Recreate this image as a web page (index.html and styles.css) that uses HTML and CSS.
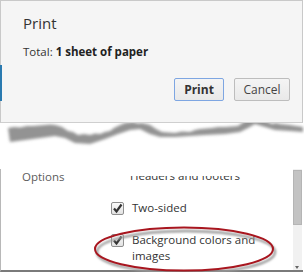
FILE: index.html
```html
<!DOCTYPE html>
<html>
<head>
<meta charset="utf-8">
<link rel="stylesheet" href="styles.css">
</head>
<body>
<div class="page">
  <div class="dialog">
    <div class="accent"></div>
    <h1 class="title">Print</h1>
    <p class="total">Total: <b>1 sheet of paper</b></p>
    <div class="actions">
      <button class="btn primary">Print</button>
      <button class="btn">Cancel</button>
    </div>
  </div>
  <svg class="tear" width="304" height="46" viewBox="0 122 304 46">
    <defs>
      <filter id="blur" x="-5%" y="-50%" width="110%" height="200%"><feGaussianBlur stdDeviation="1.4"/></filter>
    </defs>
    <path filter="url(#blur)" fill="#939393" d="M8 127 L14 126 L20 126.5 L27 125 L33 125 L39 124.5 L45 124 L50 123.5 L55 124 L62 126 L68 130 L73 131 L78 134 L84 133 L90 134 L95 132.5 L100 133 L105 131 L110 130 L114 127 L118 125 L125 122 L129 121.5 L133 121 L138 122.5 L142 122 L150 124 L156 128 L162 131 L168 131.5 L175 132 L182 130.5 L190 131 L195 129 L200 128 L206 127.5 L212 127 L218 126 L225 126 L232 125.5 L238 125 L245 120 L250 115 L256 116 L262 119 L268 121 L272 123 L276 122 L280 123 L285 123.5 L290 124 L296 125 L303 126 L303 131 L290 130 L275 129 L265 126 L255 123 L248 127 L240 131 L225 133 L205 134 L190 135 L175 136 L160 136 L150 133 L140 128 L130 129 L118 133 L105 138 L90 143 L75 142 L65 137 L55 135 L40 137 L25 139 L10 141 Z"/>
  </svg>
  <div class="lower">
    <div class="label">Options</div>
    <div class="viewport">
      <div class="list">
        <div class="row"><span class="text">Headers and footers</span></div>
        <div class="row">
          <span class="cb"><svg width="11" height="11" viewBox="0 0 11 11"><path d="M2 5.5 L4.5 8.5 L9.5 1.5" fill="none" stroke="#333" stroke-width="2.2"/></svg></span>
          <span class="text">Two-sided</span>
        </div>
        <div class="row">
          <span class="cb"><svg width="11" height="11" viewBox="0 0 11 11"><path d="M2 5.5 L4.5 8.5 L9.5 1.5" fill="none" stroke="#333" stroke-width="2.2"/></svg></span>
          <span class="text">Background colors and<br>images</span>
        </div>
      </div>
    </div>
    <div class="scrollbar"><div class="thumb"></div><div class="arrow"></div></div>
  </div>
  <svg class="mark" width="304" height="272" viewBox="0 0 304 272">
    <defs>
      <filter id="sh" x="-10%" y="-30%" width="120%" height="160%"><feGaussianBlur stdDeviation="1.3"/></filter>
    </defs>
    <ellipse cx="186" cy="252" rx="89" ry="21" fill="none" stroke="#9a9a9a" stroke-width="2.5" filter="url(#sh)"/>
    <ellipse cx="184" cy="249" rx="89" ry="21.5" fill="none" stroke="#a8161f" stroke-width="2"/>
  </svg>
</div>
</body>
</html>
```
FILE: styles.css
```css
* { box-sizing: border-box; }
html, body { margin: 0; padding: 0; background: #fff; }
body { width: 304px; height: 272px; overflow: hidden; font-family: "Open Sans", "Noto Sans", sans-serif; }
.page { position: relative; width: 304px; height: 272px; }

.dialog {
  position: relative;
  width: 303px;
  height: 123px;
  background: #f5f5f5;
  border: 1px solid #c9c9c9;
  border-bottom-color: #cfcfcf;
  padding: 12px 12px 0 22px;
}
.accent {
  position: absolute;
  left: -1px; top: 64px;
  width: 2px; height: 36px;
  background: #2a7ab0;
}
.title {
  margin: 0;
  font-size: 15px;
  line-height: 20px;
  font-weight: 400;
  color: #333;
}
.total {
  margin: 11px 0 0;
  font-size: 11.5px;
  line-height: 16px;
  color: #333;
}
.total b { font-weight: 700; color: #222; }
.actions {
  display: flex;
  justify-content: flex-end;
  gap: 10px;
  margin-top: 18px;
}
.btn {
  height: 23px;
  padding: 0;
  font-family: inherit;
  font-size: 12px;
  color: #444;
  background: linear-gradient(#f4f4f4, #e9e9e9);
  border: 1px solid #bdbdbd;
  border-radius: 2px;
  width: 56px;
}
.btn.primary {
  width: 50px;
  font-weight: 700;
  color: #333;
  border-color: #7ea6e2;
}

.tear { display: block; }

.lower {
  display: flex;
  width: 303px;
  height: 103px;
  border-left: 1px solid #b8b8b8;
  border-bottom: 2px solid #7a7a7a;
}
.label {
  width: 110px;
  padding-left: 21px;
  font-size: 11.5px;
  line-height: 16px;
  color: #5c5c5c;
}
.viewport {
  flex: 1;
  margin-top: 7px;
  overflow: hidden;
}
.list {
  margin-top: -8px;
  display: flex;
  flex-direction: column;
  gap: 16px;
}
.row {
  display: flex;
  align-items: flex-start;
  gap: 8px;
  font-size: 11.5px;
  line-height: 16px;
  color: #333;
}
.row:first-child { padding-left: 19px; }
.cb {
  width: 13px; height: 13px;
  margin-top: 2px;
  flex: none;
  border: 1px solid #8e8e8e;
  border-radius: 2px;
  background: linear-gradient(#fbfbfb, #e2e2e2);
  display: flex;
  align-items: center;
  justify-content: center;
}
.cb svg { display: block; }
.scrollbar {
  position: relative;
  width: 9px;
  margin-right: 1px;
  background: #f1f1f1;
}
.thumb {
  margin-top: 1px;
  height: 55px;
  background: #c3c3c3;
  border: 1px solid #b5b5b5;
}
.arrow {
  position: absolute;
  bottom: 1px; left: 2px;
  width: 0; height: 0;
  border-left: 2.5px solid transparent;
  border-right: 2.5px solid transparent;
  border-top: 3px solid #666;
}
.mark {
  position: absolute;
  left: 0; top: 0;
  pointer-events: none;
}
```
